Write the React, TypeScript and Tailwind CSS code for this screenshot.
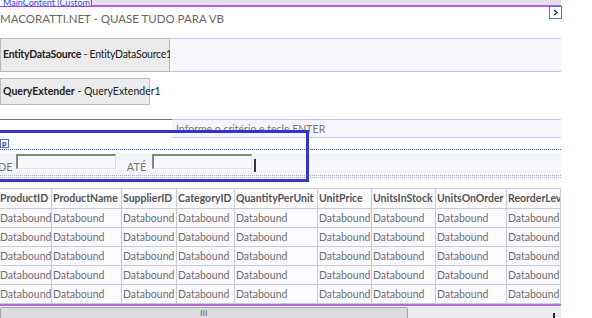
const cols = [
  "ProductID",
  "ProductName",
  "SupplierID",
  "CategoryID",
  "QuantityPerUnit",
  "UnitPrice",
  "UnitsInStock",
  "UnitsOnOrder",
  "ReorderLevel",
];

const Row = ({ header }: { header?: boolean }) => (
  <div className="grid grid-cols-[52px_70px_55px_58px_83px_54px_64px_71px_54px]">
    {cols.map((c, i) => (
      <div
        key={c}
        className={`overflow-hidden whitespace-nowrap border-r border-b border-[#c9cbd6] pl-px ${
          header ? "h-[20px] leading-[19px] font-bold text-[#555]" : "h-[19px] leading-[18px] text-[#6f6f6f]"
        } ${i === 0 ? "-ml-px" : ""}`}
      >
        {header ? c : "Databound"}
      </div>
    ))}
  </div>
);

export default function App() {
  return (
    <div className="relative w-[592px] h-[318px] overflow-hidden bg-white [font-family:Lato,sans-serif] text-[10.5px]">
      {/* designer header strip */}
      <div className="flex w-[561px] h-[7px] bg-[#e3dfe8]">
        <div className="w-[92px] h-[7px] bg-white border-r border-b border-[#a040f0] text-[9px] leading-[6px] text-[#3344dd] pl-[3px] overflow-hidden whitespace-nowrap">
          MainContent (Custom)
        </div>
        <div className="flex-1 border-b-2 border-[#b05cf0]" />
      </div>
      <div className="absolute left-[549px] top-[6px] w-[13px] h-[13px] bg-white border border-[#4a78d8] flex items-center justify-center">
        <svg width="7" height="7" viewBox="0 0 7 7">
          <path d="M2 1 L5 3.5 L2 6" fill="none" stroke="#334" strokeWidth="1.4" />
        </svg>
      </div>

      <div className="w-[561px] flex flex-col">
        <div className="h-[18px] mt-[3px] text-[11.5px] leading-[18px] text-[#666]">
          MACORATTI.NET - QUASE TUDO PARA VB
        </div>

        {/* EntityDataSource */}
        <div className="flex mt-[10px] h-[34px]">
          <div className="w-[170px] bg-[#ebebeb] border border-[#b9b9c0] flex items-center pl-[2px] text-[#222] whitespace-nowrap tracking-[-0.25px]">
            <span className="font-bold">EntityDataSource</span>
            <span>&nbsp;- EntityDataSource1</span>
          </div>
          <div className="flex-1 bg-[#f6f5fc] border-y border-[#b9c9f0]" />
        </div>

        {/* QueryExtender */}
        <div className="flex mt-[6px] h-[27px]">
          <div className="w-[150px] bg-[#ebebeb] border border-[#b9b9c0] flex items-center pl-[2px] text-[#222] whitespace-nowrap">
            <span className="font-bold">QueryExtender</span>
            <span>&nbsp;- QueryExtender1</span>
          </div>
        </div>

        {/* hint row */}
        <div className="flex mt-[14px] h-[19px]">
          <div className="w-[172px] border-t border-[#777]" />
          <div className="flex-1 bg-[#f6f5fc] border-y border-[#b9c9f0] pl-[4px] pt-[3px] text-[#777] leading-[13px] whitespace-nowrap">
            Informe o critério e tecle ENTER
          </div>
        </div>

        {/* panel tab */}
        <div className="h-[11px] flex items-start pt-px">
          <div className="h-[9px] w-[9px] bg-white border border-[#4b6fd8] text-[8px] font-bold leading-[6px] text-[#333] pl-px">
            p
          </div>
        </div>
        <div className="border-t border-dotted border-[#3354dd]" />

        {/* filter row */}
        <div className="mt-[3px] h-[22px] bg-[#f6f5fc] flex items-start text-[#777] text-[11px]">
          <span className="-ml-[2px] mt-[7px] leading-[13px]">DE</span>
          <div className="ml-[3px] mt-px w-[100px] h-[15px] border-t-2 border-l-2 border-[#858585] border-r border-b border-r-[#e2e2e2] border-b-[#e2e2e2] bg-[#f9f8fc]" />
          <span className="ml-[11px] mt-[7px] leading-[13px]">ATÉ</span>
          <div className="ml-[6px] mt-px w-[100px] h-[15px] border-t-2 border-l-2 border-[#858585] border-r border-b border-r-[#e2e2e2] border-b-[#e2e2e2] bg-[#f9f8fc]" />
          <div className="ml-[2px] mt-[6px] w-[2px] h-[13px] bg-[#333]" />
        </div>
        <div className="h-[3px] border-y border-dotted border-[#9aa8d8]" />

        {/* grid */}
        <div className="mt-[10px] border-t border-[#c9cbd6] bg-[#fbfaff]">
          <Row header />
          <Row />
          <Row />
          <Row />
          <Row />
          <Row />
        </div>
        <div className="h-[2px] bg-[#b566ea]" />

        {/* horizontal scrollbar */}
        <div className="h-[13px] mt-px bg-[#ebebeb] flex relative">
          <div className="w-[408px] h-[12px] bg-[#dcdcdc] border border-[#a8a8a8] rounded-t-[2px] flex justify-center items-center">
            <span className="text-[7px] leading-none text-[#444] tracking-[0.5px]">III</span>
          </div>
          <div className="absolute left-[553px] top-[6px] w-[2px] h-[5px] bg-[#222]" />
        </div>
      </div>

      {/* selected panel outline */}
      <div className="absolute left-[-3px] top-[130px] w-[312px] h-[52px] border-[3px] border-[#3232cc]" />
    </div>
  );
}
